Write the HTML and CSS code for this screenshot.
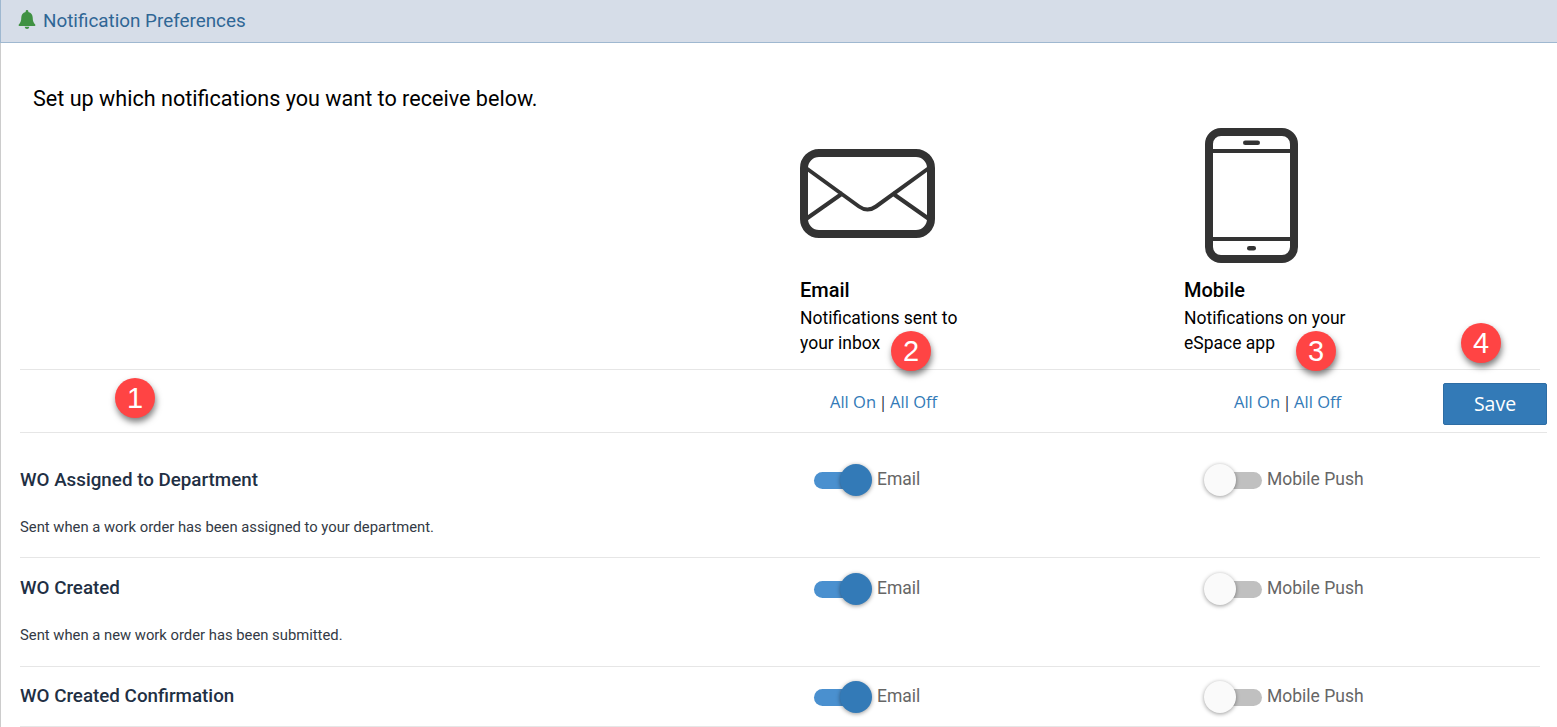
FILE: index.html
```html
<!DOCTYPE html>
<html lang="en">
<head>
<meta charset="utf-8">
<title>Notification Preferences</title>
<link rel="stylesheet" href="styles.css">
</head>
<body>
<header class="panel-head">
  <svg class="bell" viewBox="0 0 18 20" aria-hidden="true"><path d="M9 0c-.8 0-1.4.6-1.4 1.4v.6C4.6 2.600 3 5 3 8c0 4-1 5.800-2.600 7.300-.5.500-.3 1.500.6 1.500h16c.9 0 1.100-1 .6-1.500C16 13.800 15 12 15 8c0-3-1.600-5.400-4.600-6v-.6C10.400.6 9.800 0 9 0z"/><path d="M6.600 17.600h4.800C11.200 19 10.200 20 9 20s-2.200-1-2.400-2.400z"/></svg>
  <h1 class="panel-title">Notification Preferences</h1>
</header>
<main class="page">
  <p class="intro">Set up which notifications you want to receive below.</p>

  <section class="channels">
    <div class="channel">
      <svg class="icon-mail" viewBox="0 0 135 89" aria-hidden="true">
        <rect x="4" y="4" width="127" height="81" rx="15" class="ink-line"/>
        <path d="M6 19L59 57.500Q67.500 63.500 76 57.500L129 19M6 70L43 44M129 70L92 44" class="ink-thin"/>
      </svg>
      <h2 class="channel-name">Email</h2>
      <p class="channel-text">Notifications sent to<br>your inbox</p>
    </div>
    <div class="channel">
      <svg class="icon-phone" viewBox="0 0 93 135" aria-hidden="true">
        <rect x="4" y="4" width="85" height="127" rx="12" class="ink-line"/>
        <path d="M6 23h81M6 111h81" class="ink-thin"/>
        <rect x="38" y="12.500" width="17" height="4.500" rx="2.250" class="ink-fill"/>
        <rect x="42" y="118" width="9" height="4.500" rx="2.250" class="ink-fill"/>
      </svg>
      <h2 class="channel-name">Mobile</h2>
      <p class="channel-text">Notifications on your<br>eSpace app</p>
    </div>
  </section>

  <section class="bulk">
    <div></div>
    <div class="bulk-links"><a>All On</a><span class="sep">|</span><a>All Off</a></div>
    <div class="bulk-links"><a>All On</a><span class="sep">|</span><a>All Off</a></div>
    <button class="save" type="button">Save</button>
  </section>

  <section class="row row-first">
    <div class="row-info">
      <h3 class="row-title">WO Assigned to Department</h3>
      <p class="row-desc">Sent when a work order has been assigned to your department.</p>
    </div>
    <label class="toggle on"><span class="track"><span class="thumb"></span></span>Email</label>
    <label class="toggle"><span class="track"><span class="thumb"></span></span>Mobile Push</label>
  </section>

  <section class="row row-mid">
    <div class="row-info">
      <h3 class="row-title">WO Created</h3>
      <p class="row-desc">Sent when a new work order has been submitted.</p>
    </div>
    <label class="toggle on"><span class="track"><span class="thumb"></span></span>Email</label>
    <label class="toggle"><span class="track"><span class="thumb"></span></span>Mobile Push</label>
  </section>

  <section class="row row-last">
    <div class="row-info">
      <h3 class="row-title">WO Created Confirmation</h3>
    </div>
    <label class="toggle on"><span class="track"><span class="thumb"></span></span>Email</label>
    <label class="toggle"><span class="track"><span class="thumb"></span></span>Mobile Push</label>
  </section>
</main>

<span class="callout c1">1</span>
<span class="callout c2">2</span>
<span class="callout c3">3</span>
<span class="callout c4">4</span>
</body>
</html>
```
FILE: styles.css
```css
* { box-sizing: border-box; }
html, body { height: 100%; }
body {
  margin: 0;
  position: relative;
  overflow: hidden;
  background: #fff;
  font-family: Roboto, "Liberation Sans", sans-serif;
  color: #000;
}
h1, h2, h3, p { margin: 0; font-weight: 400; }

.panel-head {
  height: 43px;
  display: flex;
  align-items: center;
  gap: 7px;
  padding: 0 0 1px 17px;
  background: #d6dde8;
  border-left: 1px solid #9fb8d0;
  border-bottom: 1px solid #9fb8d0;
}
.bell { width: 18px; height: 19px; fill: #3f9142; flex: none; margin-top: -2px; }
.panel-title { font-size: 18.85px; color: #2f6695; }

.page {
  border-left: 1px solid #ccc;
  padding: 42px 17px 0 19px;
  height: 684px;
}
.intro { font-size: 21.6px; line-height: 28px; margin-left: 13px; }

.channels {
  display: grid;
  grid-template-columns: 384px 300px;
  margin-top: 15px;
  padding: 0 0 13px 780px;
  border-bottom: 1px solid #e6e6e6;
}
.channel-name { font-size: 20px; font-weight: 500; line-height: 24px; margin-top: 15px; }
.channel-text { font-size: 17.5px; line-height: 25px; margin-top: 4px; }
.icon-mail { display: block; width: 135px; height: 89px; margin-top: 21px; margin-bottom: 40px; }
.icon-phone { display: block; width: 93px; height: 135px; margin-left: 21px; }
.ink-line { fill: none; stroke: #333; stroke-width: 8; }
.ink-thin { fill: none; stroke: #333; stroke-width: 4; }
.ink-fill { fill: #333; }

.bulk {
  display: grid;
  grid-template-columns: 810px 404px 209px 104px;
  align-items: center;
  height: 63px;
  border-bottom: 1px solid #e6e6e6;
  margin-right: -7px;
}
.bulk-links { font-family: "Open Sans", sans-serif; font-size: 16.5px; color: #1f3044; }
.bulk-links a { color: #337ab7; }
.sep { margin: 0 2.500px; }
.save {
  height: 42px;
  margin-top: 5px;
  padding: 0;
  border: 1px solid #2e6da4;
  border-radius: 2px;
  background: #337ab7;
  color: #fff;
  font-family: "Open Sans", sans-serif;
  font-size: 19.5px;
}

.row {
  display: grid;
  grid-template-columns: 794px 390px 1fr;
  align-items: start;
  padding-top: 16px;
  height: 109px;
  border-bottom: 1px solid #e6e6e6;
}
.row-first { padding-top: 33px; height: 125px; }
.row-last { height: 60px; }
.row-title { font-size: 18.8px; font-weight: 500; line-height: 26px; margin-top: 1px; color: #1f3044; }
.row-last .row-title { margin-top: 0; }
.row-desc { font-size: 14.8px; line-height: 20px; margin-top: 24px; color: #333a45; }

.toggle {
  display: flex;
  align-items: center;
  gap: 11px;
  height: 26px;
  font-size: 17.5px;
  line-height: 24px;
  color: #666;
}
.row-mid .toggle { margin-top: 1px; }
.track {
  display: block;
  position: relative;
  flex: none;
  width: 52px;
  height: 17px;
  border-radius: 9px;
  background: #c0c0c0;
  margin-top: 3px;
}
.thumb {
  position: absolute;
  top: -8px;
  left: -8px;
  width: 32px;
  height: 32px;
  border-radius: 50%;
  background: #fafafa;
  box-shadow: 0 1px 4px rgba(0, 0, 0, .4);
}
.toggle.on .track { background: #4a90cf; }
.toggle.on .thumb { left: 26px; background: #337ab7; }
.toggle:not(.on) { padding-left: 8px; gap: 5px; }
.toggle:not(.on) .track { width: 50px; }

.callout {
  position: absolute;
  width: 40px;
  height: 40px;
  border-radius: 50%;
  background: #ff4444;
  color: #fff;
  font-family: "Liberation Sans", Arial, sans-serif;
  font-size: 29px;
  line-height: 40px;
  text-align: center;
  box-shadow: 1px 4px 6px rgba(0, 0, 0, .5);
}
.c1 { left: 115px; top: 378px; }
.c2 { left: 891px; top: 331px; }
.c3 { left: 1296px; top: 331px; }
.c4 { left: 1461px; top: 323px; }
```
